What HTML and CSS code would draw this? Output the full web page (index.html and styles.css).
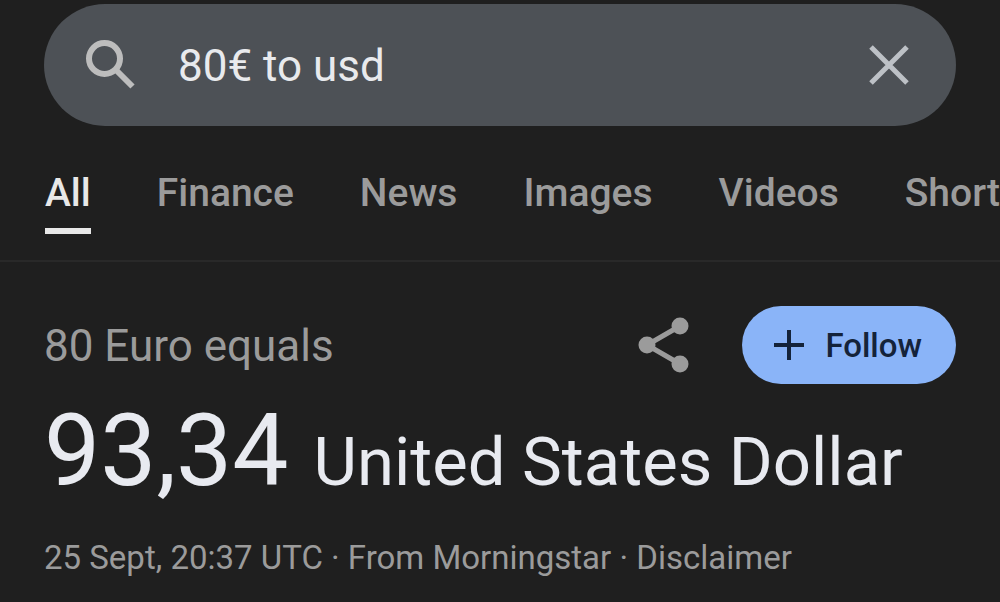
FILE: index.html
```html
<!DOCTYPE html>
<html lang="en">
<head>
<meta charset="utf-8">
<meta name="viewport" content="width=device-width, initial-scale=1">
<title>80€ to usd</title>
<link rel="stylesheet" href="styles.css">
</head>
<body>
<header class="top">
  <form class="search" role="search">
    <svg class="search-icon" viewBox="0 0 50 50" aria-hidden="true"><circle cx="18.5" cy="18.5" r="15.5"/><path d="M30 30L46.5 46.5"/></svg>
    <input class="search-input" type="text" aria-label="Search" value="80€ to usd">
    <button class="clear" type="button" aria-label="Clear"><svg viewBox="0 0 40 40" aria-hidden="true"><path d="M2 2L38 38M38 2L2 38"/></svg></button>
  </form>
  <nav class="tabs">
    <a class="tab active" href="#">All</a>
    <a class="tab" href="#">Finance</a>
    <a class="tab" href="#">News</a>
    <a class="tab" href="#">Images</a>
    <a class="tab" href="#">Videos</a>
    <a class="tab" href="#">Short</a>
  </nav>
</header>
<main class="result">
  <div class="row">
    <p class="from">80 Euro equals</p>
    <button class="share" type="button" aria-label="Share"><svg viewBox="0 0 52 56" aria-hidden="true"><path d="M42 9L9 28L42 47"/><circle cx="42" cy="9" r="8.5"/><circle cx="9" cy="28" r="8.5"/><circle cx="42" cy="47" r="8.5"/></svg></button>
    <button class="follow" type="button"><svg viewBox="0 0 30 30" aria-hidden="true"><path d="M15 0V30M0 15H30"/></svg>Follow</button>
  </div>
  <p class="value"><span class="amount">93,34</span><span class="currency">United States Dollar</span></p>
  <p class="meta">25 Sept, 20:37 UTC · From Morningstar · <a href="#">Disclaimer</a></p>
</main>
</body>
</html>
```
FILE: styles.css
```css
* { box-sizing: border-box; }
body {
  margin: 0;
  background: #1f1f1f;
  color: #e8eaf0;
  font-family: Roboto, "Liberation Sans", sans-serif;
  overflow-x: hidden;
}
p { margin: 0; }
a { color: inherit; text-decoration: none; }
button { border: 0; padding: 0; background: none; font: inherit; cursor: pointer; }
svg { display: block; fill: none; }
.top { padding-top: 4px; border-bottom: 2px solid #292929; }
.search {
  display: flex;
  align-items: center;
  height: 122px;
  margin: 0 44px;
  padding: 0 47px 0 42px;
  border-radius: 61px;
  background: #4d5156;
}
.search-icon { width: 50px; height: 50px; stroke: #bdbdbd; stroke-width: 6; }
.search-input {
  flex: 1;
  min-width: 0;
  margin-left: 42px;
  padding: 2px 0 0;
  border: 0;
  outline: 0;
  background: none;
  color: #e8eaed;
  font: 44px/56px Roboto, "Liberation Sans", sans-serif;
}
.clear svg { width: 40px; height: 40px; stroke: #bdc1c6; stroke-width: 5; }
.tabs {
  display: flex;
  gap: 66px;
  padding: 43px 0 26px 45px;
  overflow: hidden;
  white-space: nowrap;
}
.tab {
  flex: none;
  padding-bottom: 11px;
  border-bottom: 6px solid transparent;
  color: #9b9b9b;
  font-size: 39px;
  line-height: 48px;
  font-weight: 500;
}
.active { color: #e8e8e8; border-color: #e8e8e8; }
.result { padding: 44px 44px 24px; }
.row { display: flex; align-items: center; }
.from { flex: 1; padding-top: 2px; color: #9b9b9b; font-size: 44px; line-height: 56px; }
.share svg { width: 52px; height: 56px; fill: #9b9b9b; stroke: none; }
.share path { fill: none; stroke: #9b9b9b; stroke-width: 5; }
.follow {
  display: flex;
  align-items: center;
  gap: 21px;
  height: 78px;
  margin-left: 52px;
  padding: 0 34px 0 32px;
  border-radius: 39px;
  background: #8ab4f8;
  color: #14233a;
  font-size: 33px;
  font-weight: 500;
}
.follow svg { width: 30px; height: 30px; stroke: #14233a; stroke-width: 4; }
.value { display: flex; align-items: baseline; gap: 25px; padding-top: 2px; white-space: nowrap; }
.amount { font-size: 100px; line-height: 130px; }
.currency { font-size: 67px; }
.meta { margin-top: 20px; color: #9b9b9b; font-size: 33px; line-height: 44px; }
```
